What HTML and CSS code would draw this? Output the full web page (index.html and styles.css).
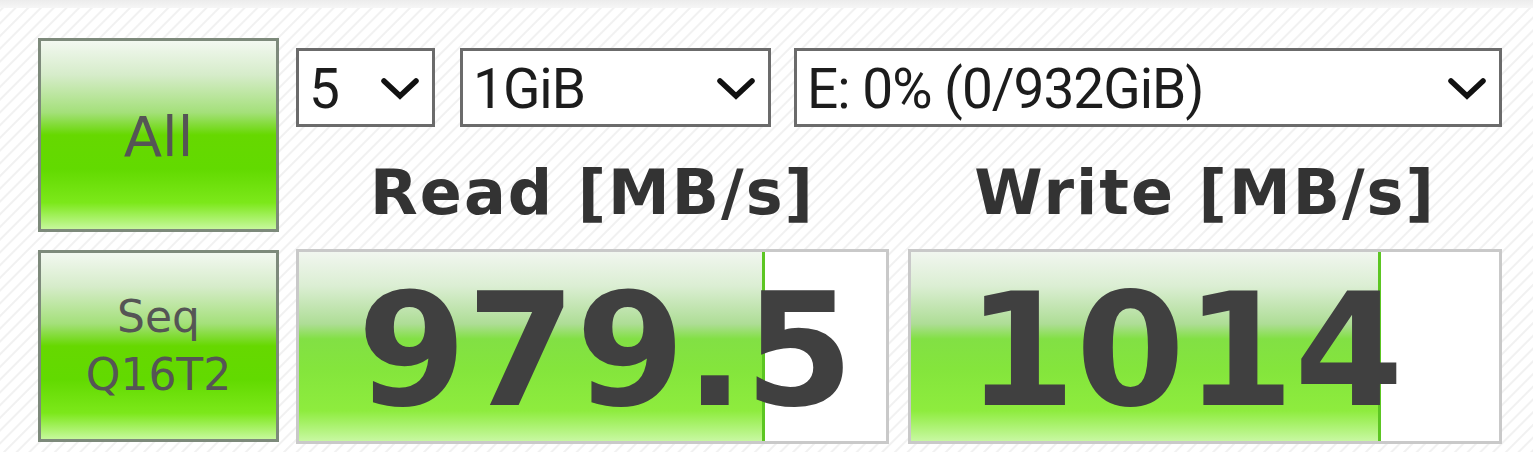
FILE: index.html
```html
<!DOCTYPE html>
<html>
<head>
<meta charset="utf-8">
<link rel="stylesheet" href="styles.css">
</head>
<body>
<div class="topstrip"></div>
<div class="panel">
  <div class="btn btn-all">All</div>
  <div class="controls">
    <div class="selects">
      <div class="select sel-count"><span>5</span><svg class="chev" viewBox="0 0 40 24"><polyline points="4,4 20,19 36,4"/></svg></div>
      <div class="select sel-size"><span>1GiB</span><svg class="chev" viewBox="0 0 40 24"><polyline points="4,4 20,19 36,4"/></svg></div>
      <div class="select sel-drive"><span>E: 0% (0/932GiB)</span><svg class="chev" viewBox="0 0 40 24"><polyline points="4,4 20,19 36,4"/></svg></div>
    </div>
    <div class="heads">
      <div class="head">Read [MB/s]</div>
      <div class="head">Write [MB/s]</div>
    </div>
  </div>
  <div class="btn btn-seq"><span>Seq</span><span>Q16T2</span></div>
  <div class="results">
    <div class="meter meter-read" style="--pct:79.4%"><span>979.5</span></div>
    <div class="meter meter-write" style="--pct:80%"><span>1014</span></div>
  </div>
</div>
</body>
</html>
```
FILE: styles.css
```css
html, body {
  margin: 0;
  padding: 0;
}
body {
  width: 1533px;
  height: 452px;
  overflow: hidden;
  background-color: #ffffff;
  background-image: repeating-linear-gradient(135deg, #ffffff 0px, #ffffff 6px, #f1f1f1 7px, #f1f1f1 8px, #ffffff 9px);
  font-family: "DejaVu Sans", sans-serif;
}
.topstrip {
  height: 8px;
  background: linear-gradient(180deg, #ececec, #f6f6f6);
}
.panel {
  display: grid;
  grid-template-columns: 241px 1206px;
  grid-template-rows: 194px 193px;
  column-gap: 17px;
  row-gap: 17px;
  padding: 30px 0 0 38px;
}
.btn {
  box-sizing: border-box;
  border: 3px solid #7d8a7b;
  background: linear-gradient(180deg, #f2f8f0 0%, #d6ecca 18%, #a4e07a 38%, #66d800 50%, #62da00 68%, #7ce81a 86%, #c6f89c 100%);
  display: flex;
  flex-direction: column;
  align-items: center;
  justify-content: center;
  color: #555555;
  font-family: "DejaVu Sans", sans-serif;
}
.btn-all {
  font-size: 56px;
  padding-top: 2px;
}
.btn-seq {
  font-size: 44px;
  line-height: 58px;
  margin-top: 1px;
}
.controls {
  display: flex;
  flex-direction: column;
}
.selects {
  display: flex;
  margin-top: 10px;
  height: 79px;
}
.select {
  box-sizing: border-box;
  height: 79px;
  border: 3px solid #6b6b6b;
  background: #ffffff;
  display: flex;
  align-items: center;
  justify-content: space-between;
  padding: 0 12px 0 10px;
  font-family: Roboto, sans-serif;
  font-size: 55px;
  letter-spacing: -1px;
  color: #1c1c1c;
}
.select span {
  margin-top: 2px;
}
.sel-count { width: 139px; }
.sel-size { width: 311px; margin-left: 25px; }
.sel-drive { width: 708px; margin-left: 23px; }
.chev {
  width: 40px;
  height: 24px;
  margin-top: 2px;
}
.chev polyline {
  fill: none;
  stroke: #111111;
  stroke-width: 5.5;
  stroke-linecap: round;
  stroke-linejoin: miter;
}
.heads {
  display: grid;
  grid-template-columns: 593px 594px;
  column-gap: 19px;
  margin-top: 32px;
}
.head {
  text-align: center;
  font-family: "DejaVu Sans", sans-serif;
  font-weight: bold;
  font-size: 62px;
  letter-spacing: 2px;
  line-height: 68px;
  color: #333333;
}
.results {
  display: grid;
  grid-template-columns: 593px 594px;
  column-gap: 19px;
}
.meter {
  box-sizing: border-box;
  border: 3px solid #c9c9c9;
  background-color: #ffffff;
  background-image:
    linear-gradient(90deg, transparent calc(100% - 3px), #5cc622 calc(100% - 3px)),
    linear-gradient(180deg, #f1f6ef 0%, #dbeed3 18%, #aedd96 38%, #82e044 46%, #84e53c 62%, #8eec3e 84%, #c8f8a2 100%);
  background-size: var(--pct) 100%, var(--pct) 100%;
  background-repeat: no-repeat;
  display: flex;
  align-items: center;
  justify-content: center;
}
.meter-read {
  padding-left: 26px;
}
.meter-write {
  padding-right: 40px;
}
.meter span {
  font-family: "DejaVu Sans", sans-serif;
  font-weight: bold;
  font-size: 157px;
  line-height: 180px;
  color: #404040;
  margin-top: 9px;
}
```
